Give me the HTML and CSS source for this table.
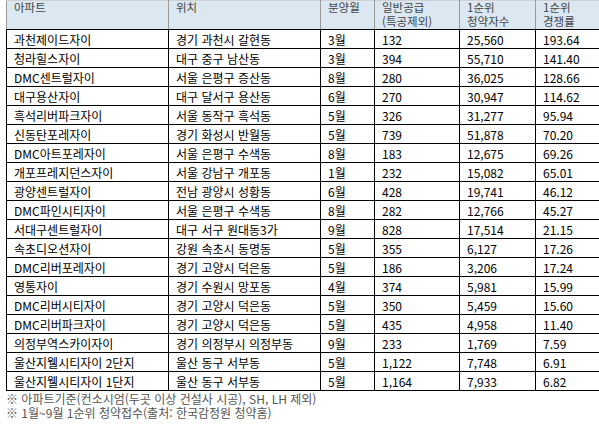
FILE: index.html
```html
<!DOCTYPE html>
<html lang="ko">
<head>
<meta charset="utf-8">
<link rel="stylesheet" href="styles.css">
</head>
<body>
<div class="wrap">
<table class="grid">
<colgroup>
<col class="c1"><col class="c2"><col class="c3"><col class="c4"><col class="c5"><col class="c6">
</colgroup>
<thead>
<tr><th>아파트</th><th>위치</th><th>분양월</th><th>일반공급<br>(특공제외)</th><th>1순위<br>청약자수</th><th>1순위<br>경쟁률</th></tr>
</thead>
<tbody>
<tr><td>과천제이드자이</td><td>경기 과천시 갈현동</td><td>3월</td><td>132</td><td>25,560</td><td>193.64</td></tr>
<tr><td>청라힐스자이</td><td>대구 중구 남산동</td><td>3월</td><td>394</td><td>55,710</td><td>141.40</td></tr>
<tr><td>DMC센트럴자이</td><td>서울 은평구 증산동</td><td>8월</td><td>280</td><td>36,025</td><td>128.66</td></tr>
<tr><td>대구용산자이</td><td>대구 달서구 용산동</td><td>6월</td><td>270</td><td>30,947</td><td>114.62</td></tr>
<tr><td>흑석리버파크자이</td><td>서울 동작구 흑석동</td><td>5월</td><td>326</td><td>31,277</td><td>95.94</td></tr>
<tr><td>신동탄포레자이</td><td>경기 화성시 반월동</td><td>5월</td><td>739</td><td>51,878</td><td>70.20</td></tr>
<tr><td>DMC아트포레자이</td><td>서울 은평구 수색동</td><td>8월</td><td>183</td><td>12,675</td><td>69.26</td></tr>
<tr><td>개포프레지던스자이</td><td>서울 강남구 개포동</td><td>1월</td><td>232</td><td>15,082</td><td>65.01</td></tr>
<tr><td>광양센트럴자이</td><td>전남 광양시 성황동</td><td>6월</td><td>428</td><td>19,741</td><td>46.12</td></tr>
<tr><td>DMC파인시티자이</td><td>서울 은평구 수색동</td><td>8월</td><td>282</td><td>12,766</td><td>45.27</td></tr>
<tr><td>서대구센트럴자이</td><td>대구 서구 원대동3가</td><td>9월</td><td>828</td><td>17,514</td><td>21.15</td></tr>
<tr><td>속초디오션자이</td><td>강원 속초시 동명동</td><td>5월</td><td>355</td><td>6,127</td><td>17.26</td></tr>
<tr><td>DMC리버포레자이</td><td>경기 고양시 덕은동</td><td>5월</td><td>186</td><td>3,206</td><td>17.24</td></tr>
<tr><td>영통자이</td><td>경기 수원시 망포동</td><td>4월</td><td>374</td><td>5,981</td><td>15.99</td></tr>
<tr><td>DMC리버시티자이</td><td>경기 고양시 덕은동</td><td>5월</td><td>350</td><td>5,459</td><td>15.60</td></tr>
<tr><td>DMC리버파크자이</td><td>경기 고양시 덕은동</td><td>5월</td><td>435</td><td>4,958</td><td>11.40</td></tr>
<tr><td>의정부역스카이자이</td><td>경기 의정부시 의정부동</td><td>9월</td><td>233</td><td>1,769</td><td>7.59</td></tr>
<tr><td>울산지웰시티자이 2단지</td><td>울산 동구 서부동</td><td>5월</td><td>1,122</td><td>7,748</td><td>6.91</td></tr>
<tr><td>울산지웰시티자이 1단지</td><td>울산 동구 서부동</td><td>5월</td><td>1,164</td><td>7,933</td><td>6.82</td></tr>
</tbody>
</table>
<div class="notes">
<p>※ 아파트기준(컨소시엄(두곳 이상 건설사 시공), SH, LH 제외)</p>
<p>※ 1월~9월 1순위 청약접수(출처: 한국감정원 청약홈)</p>
</div>
</div>
</body>
</html>
```

FILE: styles.css
```css
html, body {
  margin: 0;
  padding: 0;
  background: #ffffff;
}

.wrap {
  padding-left: 6px;
}

.grid {
  border-collapse: collapse;
  table-layout: fixed;
  width: 593px;
  font-family: "Noto Sans CJK KR", "Noto Sans", sans-serif;
  font-size: 12px;
  color: #000;
}

.c1 { width: 162px; }
.c2 { width: 152px; }
.c3 { width: 54px; }
.c4 { width: 85px; }
.c5 { width: 76px; }
.c6 { width: 64px; }

.grid th {
  background: #dbe8f1;
  color: #444;
  font-weight: normal;
  text-align: left;
  vertical-align: top;
  height: 29px;
  padding: 0 0 0 7px;
  font-size: 11.5px;
  line-height: 13.5px;
  border: 1px solid #9a9a9a;
  border-top-color: #d0d0d0;
  border-bottom-color: #000;
  box-sizing: border-box;
}

.grid td {
  height: 19px;
  padding: 0 0 0 7px;
  line-height: 17px;
  border: 1px solid #000;
  white-space: nowrap;
  overflow: hidden;
  box-sizing: border-box;
}

.notes {
  padding-top: 1px;
  font-family: "Noto Sans CJK KR", "Noto Sans", sans-serif;
  font-size: 12px;
  line-height: 14px;
  color: #555;
}

.notes p {
  margin: 0;
}
```
